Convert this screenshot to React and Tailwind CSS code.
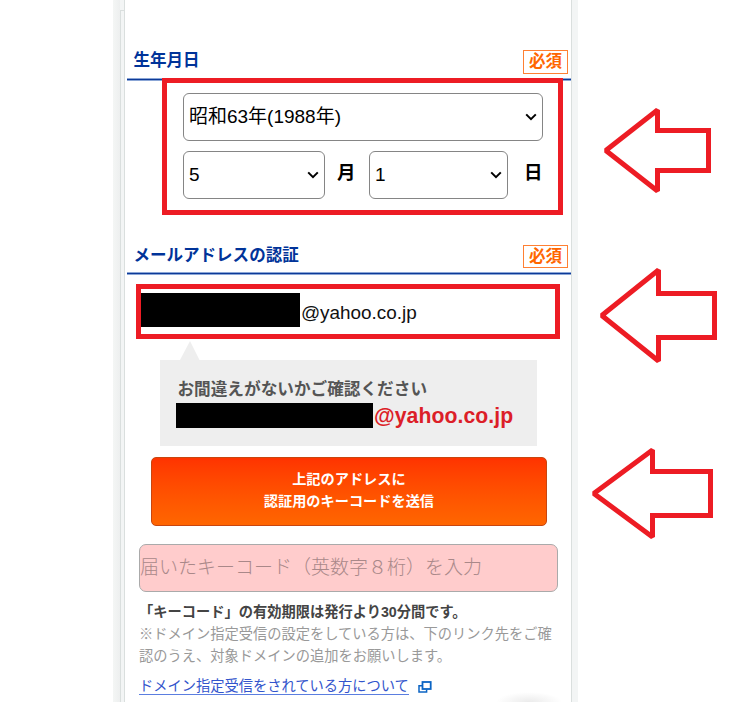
// ============================================
// FILE: App.jsx
// Sign-up form (birth date + mail verification) with annotation arrows
// ============================================

const ARROWS = [
  "605.8,150.5 657.5,110 657.5,130.5 708.5,130.5 708.5,170.5 657.5,170.5 657.5,191",
  "601.8,315.5 658.5,270 658.5,293.5 714.5,293.5 714.5,337.5 658.5,337.5 658.5,361",
  "593.8,493.5 652.5,450 652.5,471.5 710.5,471.5 710.5,515.5 652.5,515.5 652.5,537",
];

export default function App() {
  return (
    <div className="relative h-[702px] w-[738px] overflow-hidden bg-white font-['Liberation_Sans','Noto_Sans_CJK_JP',sans-serif]">
      <div className="ml-[113px] flex h-full w-[465px]">
        {/* ── Left gutter ────────────────────────────────────────────── */}
        <div className="h-full w-[7px] bg-linear-to-r from-[#f4f6f5] to-[#edefef]" />
        <div className="flex h-full w-[5px] flex-col bg-[#f3f5f5]">
          <div className="mt-[10px] flex-1 border-t border-l border-[#dadfde]" />
        </div>

        {/* ── Form column ────────────────────────────────────────────── */}
        <main className="-ml-px box-content flex h-full w-[447px] flex-col border-x border-[#dadfde] bg-white pl-[2px]">
          <SectionHeader title="生年月日" className="mt-[48px] h-[32px]" badgeClass="h-[24px] pb-[3px]" />

          <div className="mt-[13px] ml-[56px] w-[360px] text-[19px] text-black">
            <SelectBox value="昭和63年(1988年)" className="w-[360px]" />
            <div className="mt-[10px] flex items-center">
              <SelectBox value="5" className="w-[142px]" />
              <span className="relative -top-[2px] ml-[12px] w-[32px] text-[18.5px] font-bold">月</span>
              <SelectBox value="1" className="w-[139px]" />
              <span className="relative -top-[2px] ml-[16px] text-[18.5px] font-bold">日</span>
            </div>
          </div>

          <SectionHeader title="メールアドレスの認証" className="mt-[44px] h-[31px]" badgeClass="h-[23px] pb-px" />

          {/* Mail address, user part hidden */}
          <div className="mt-[10px] ml-[9px] flex h-[55px] w-[424px] items-start border-[5px] border-[#ed1c24] pt-[4px]">
            <span className="h-[34px] w-[159px] bg-black" />
            <span className="ml-px text-[18.9px] leading-[39px] text-[#111]">@yahoo.co.jp</span>
          </div>

          {/* Confirmation balloon */}
          <div className="mt-[2px] ml-[33px] w-[377.5px]">
            <svg className="ml-[20px] block" width="20" height="19" viewBox="0 0 20 19">
              <path d="M10 0L19.5 19H0Z" fill="#eee" />
            </svg>
            <div className="flex h-[86px] flex-col bg-[#eee] pt-[17px]">
              <p className="ml-[17.5px] text-[16.65px] leading-[25px] font-bold text-[#555]">
                お間違えがないかご確認ください
              </p>
              <div className="ml-[16px] flex h-[25px] items-center">
                <span className="mt-[2px] h-[25px] w-[197px] bg-black" />
                <span className="mt-[2px] ml-px text-[21.2px] leading-[25px] font-bold tracking-[0.08px] text-[#dc1e28]">
                  @yahoo.co.jp
                </span>
              </div>
            </div>
          </div>

          <button className="mt-[11px] ml-[24px] h-[69px] w-[396px] rounded-[5px] border border-[#c8460f] bg-linear-to-b from-[#ff3300] to-[#ff6600] pb-[2px] text-center text-[14.2px] leading-[21.5px] font-bold text-white">
            上記のアドレスに
            <br />
            認証用のキーコードを送信
          </button>

          <div className="mt-[18px] ml-[12px] flex h-[48px] w-[419px] items-center rounded-[7px] border border-[#aaa] bg-[#fcc] text-[19px] font-light text-[#a98889]">
            届いたキーコード（英数字８桁）を入力
          </div>

          <div className="mt-[9px] ml-[12px] w-[425px] text-[14.25px] leading-[22px] whitespace-nowrap text-[#999]">
            <p className="font-bold text-[#444]">「キーコード」の有効期限は発行より30分間です。</p>
            <p>※ドメイン指定受信の設定をしている方は、下のリンク先をご確</p>
            <p>認のうえ、対象ドメインの追加をお願いします。</p>
          </div>

          <div className="mt-[9px] ml-[12px] flex items-center">
            <a className="h-[19px] border-b border-[#5b7ee0] text-[14.25px] leading-[21px] whitespace-nowrap text-[#3355cc]">
              ドメイン指定受信をされている方について
            </a>
            <svg className="mt-[2px] ml-[9px]" width="14" height="12" viewBox="0 0 14 12" fill="none" stroke="#0b64c4">
              <path d="M4 4.7H1V11H8.6V8.5" strokeWidth="1.5" />
              <rect x="4.5" y="1" width="8.2" height="7" strokeWidth="1.8" />
            </svg>
          </div>
        </main>

        {/* ── Right gutter ───────────────────────────────────────────── */}
        <div className="h-full w-[6px] bg-[#f3f5f5]" />
      </div>

      {/* Shadow of the floating button below the fold */}
      <div className="absolute top-[692px] left-[496px] h-[10px] w-[66px] bg-[radial-gradient(ellipse_at_bottom,#ebebeb_0%,#ffffff_70%)]" />

      {/* ── Annotations ──────────────────────────────────────────────── */}
      <div className="absolute top-[78px] left-[162px] h-[137px] w-[401px] border-[5px] border-[#ed1c24]" />
      <svg className="absolute inset-0" width="738" height="702" fill="none" stroke="#ed1c24" strokeWidth="5" strokeMiterlimit="1.5">
        {ARROWS.map((points) => (
          <polygon key={points} points={points} />
        ))}
      </svg>
    </div>
  );
}

// ── Section title with the "required" badge ───────────────────────────────────
function SectionHeader({ title, className, badgeClass }) {
  return (
    <div className={`flex w-[444px] shrink-0 items-start justify-between border-b border-[#0d3a98] pr-[3px] pl-[6.5px] shadow-[0_1px_#8ba6d6,inset_0_-1px_#8ba6d6] ${className}`}>
      <h2 className="text-[16.55px] leading-[25px] font-bold text-[#003399]">{title}</h2>
      <span className={`mt-[2px] flex w-[45px] items-center justify-center border border-[#ff8033] text-[16.5px] leading-[20px] font-bold text-[#ff6600] ${badgeClass}`}>
        必須
      </span>
    </div>
  );
}

// ── Closed select box ─────────────────────────────────────────────────────────
function SelectBox({ value, className }) {
  return (
    <div className={`flex h-[48px] items-center justify-between rounded-[6px] border border-[#858585] bg-white pr-[5px] pl-[5px] ${className}`}>
      <span>{value}</span>
      <svg width="12" height="8" viewBox="0 0 12 8" fill="none" stroke="#000" strokeWidth="2">
        <path d="M1.2 1.4L6 6.2L10.8 1.4" />
      </svg>
    </div>
  );
}
